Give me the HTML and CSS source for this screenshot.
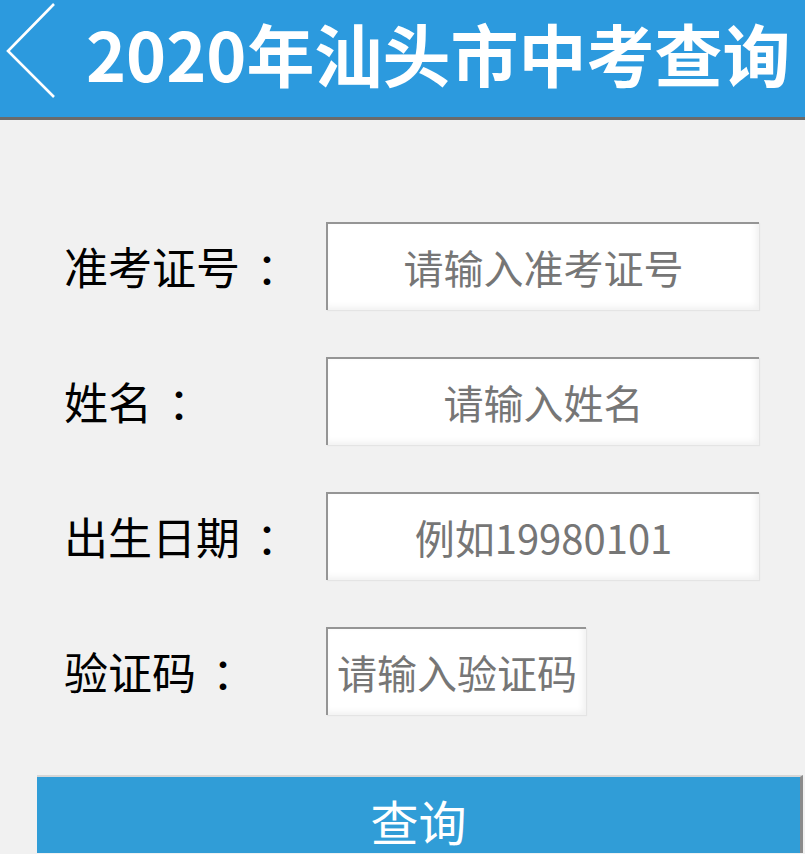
FILE: index.html
```html
<!DOCTYPE html>
<html lang="zh-CN">
<head>
<meta charset="utf-8">
<title>2020年汕头市中考查询</title>
<link rel="stylesheet" href="styles.css">
</head>
<body>
<header class="topbar">
  <a class="back" href="#" aria-label="返回">
    <svg width="60" height="110" viewBox="0 0 60 110"><polyline points="54,4 8,51 54,97" fill="none" stroke="#fff" stroke-width="2.6"/></svg>
  </a>
  <h1 class="title">2020年汕头市中考查询</h1>
</header>
<main class="form">
  <div class="row">
    <label class="label">准考证号<span class="colon">：</span></label>
    <input class="field" type="text" placeholder="请输入准考证号">
  </div>
  <div class="row">
    <label class="label">姓名<span class="colon">：</span></label>
    <input class="field" type="text" placeholder="请输入姓名">
  </div>
  <div class="row">
    <label class="label">出生日期<span class="colon">：</span></label>
    <input class="field" type="text" placeholder="例如19980101">
  </div>
  <div class="row">
    <label class="label">验证码<span class="colon">：</span></label>
    <input class="field field-short" type="text" placeholder="请输入验证码">
  </div>
  <div class="actions">
    <button class="submit" type="button">查询</button>
  </div>
</main>
</body>
</html>
```
FILE: styles.css
```css
html, body {
  margin: 0;
  padding: 0;
  background: #f1f1f1;
  font-family: "Noto Sans CJK SC", "Noto Sans", sans-serif;
  overflow: hidden;
}
.topbar {
  display: flex;
  align-items: flex-start;
  height: 117px;
  background: #2c9ade;
  border-bottom: 3px solid #6a6a6a;
}
.back {
  display: block;
  width: 60px;
  height: 110px;
}
.back svg { display: block; }
.title {
  margin: 0 0 0 26px;
  color: #fff;
  font-size: 68px;
  font-weight: 700;
  line-height: 106px;
  white-space: nowrap;
}
.form {
  padding-top: 102px;
}
.row {
  display: flex;
  align-items: center;
  height: 88px;
  margin-bottom: 47px;
}
.row:nth-child(4) { margin-bottom: 0; }
.label {
  display: block;
  flex: 0 0 auto;
  width: 326px;
  padding-left: 64px;
  box-sizing: border-box;
  font-size: 44px;
  line-height: 50px;
  color: #000;
  white-space: nowrap;
}
.colon {
  display: inline-block;
  margin-left: 16px;
}
.field {
  flex: 0 0 auto;
  box-sizing: border-box;
  width: 433px;
  height: 88px;
  margin: 0;
  padding: 0;
  border: none;
  border-top: 2px solid #959595;
  border-left: 2px solid #959595;
  background: #fff;
  box-shadow: inset -3px -3px 6px rgba(0,0,0,0.06), 1px 1px 1px rgba(0,0,0,0.05);
  font-family: "Noto Sans CJK SC", sans-serif;
  font-size: 40px;
  text-align: center;
  color: #333;
  outline: none;
}
.field::placeholder {
  color: #767676;
  opacity: 1;
}
.field-short {
  width: 260px;
}
.actions {
  padding: 60px 2px 0 37px;
}
.submit {
  display: block;
  box-sizing: border-box;
  width: 100%;
  height: 78px;
  margin: 0;
  padding: 10px 0 0 0;
  border: none;
  border-top: 2px solid #d6d6d6;
  border-right: 3px solid #8b8b8b;
  background: #309dd7;
  color: #fff;
  font-family: "Noto Sans CJK SC", sans-serif;
  font-size: 48px;
  line-height: 64px;
  text-align: center;
}
```
